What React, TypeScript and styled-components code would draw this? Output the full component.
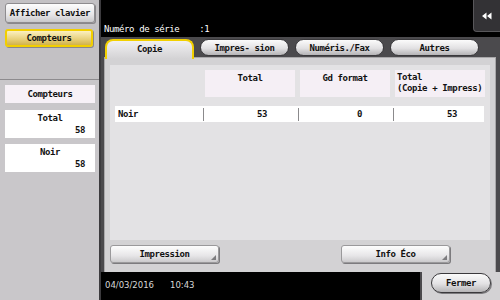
import styled, { createGlobalStyle } from 'styled-components';

const GlobalStyle = createGlobalStyle`
  html, body {
    margin: 0;
    padding: 0;
    background: #000;
  }
  * {
    box-sizing: border-box;
  }
`;

const mono = `'DejaVu Sans Mono', 'Liberation Mono', monospace`;

function App() {
  const tabs = ['Copie', 'Impres- sion', 'Numéris./Fax', 'Autres'];

  return (
    <>
      <GlobalStyle />
      <Screen>
        <Sidebar>
          <SideTop>
            <SideButton>Afficher clavier</SideButton>
            <SideButton active>Compteurs</SideButton>
          </SideTop>
          <SideBottom>
            <SideHeader>Compteurs</SideHeader>
            <CountBox>
              <span>Total</span>
              <CountValue>58</CountValue>
            </CountBox>
            <CountBox>
              <span>Noir</span>
              <CountValue>58</CountValue>
            </CountBox>
          </SideBottom>
        </Sidebar>

        <Main>
          <TopBar>
            <Serial>{'Numéro de série    :1'}</Serial>
            <CornerButton>
              <svg width='10' height='8' viewBox='0 0 10 8'>
                <path d='M0 4 L4.5 0.5 L4.5 7.5 Z M5 4 L9.5 0.5 L9.5 7.5 Z' fill='#fff' />
              </svg>
            </CornerButton>
          </TopBar>

          <Body>
            <TabRow>
              {tabs.map((t, i) => (
                <Tab key={t} selected={i === 0}>
                  {t}
                </Tab>
              ))}
            </TabRow>
            <Panel>
              <Content>
                <HeaderGrid>
                  <span />
                  <HeadCell>Total</HeadCell>
                  <HeadCell>Gd format</HeadCell>
                  <HeadCell left>
                    Total
                    <br />
                    (Copie + Impress)
                  </HeadCell>
                </HeaderGrid>
                <DataRow>
                  <RowLabel>Noir</RowLabel>
                  <RowValue>53</RowValue>
                  <RowValue>0</RowValue>
                  <RowValue last>53</RowValue>
                </DataRow>
              </Content>
              <ActionRow>
                <ActionButton>Impression</ActionButton>
                <ActionButton>Info Éco</ActionButton>
              </ActionRow>
            </Panel>
          </Body>

          <Footer>
            <StatusBar>
              <span>04/03/2016</span>
              <span>10:43</span>
            </StatusBar>
            <CloseArea>
              <CloseButton>Fermer</CloseButton>
            </CloseArea>
          </Footer>
        </Main>
      </Screen>
    </>
  );
}

const Screen = styled.div`
  width: 500px;
  height: 300px;
  display: flex;
  overflow: hidden;
  font-family: ${mono};
  font-size: 9px;
  letter-spacing: -0.4px;
  color: #111;
`;

const Sidebar = styled.div`
  width: 101px;
  height: 300px;
  display: flex;
  flex-direction: column;
  background: #c9c7ca;
  border-right: 2px solid #3c3b3e;
`;

const SideTop = styled.div`
  height: 80px;
  padding: 3px 5px 0 5px;
  display: flex;
  flex-direction: column;
  gap: 6px;
  background: #c3c1c4;
  border-bottom: 1px solid #8d8b8e;
`;

const SideButton = styled.div<{ active?: boolean }>`
  height: ${(p) => (p.active ? '18px' : '20px')};
  width: ${(p) => (p.active ? '88px' : '90px')};
  display: flex;
  align-items: center;
  justify-content: center;
  font-weight: bold;
  border-radius: 3px;
  border: ${(p) => (p.active ? '2px solid #f2cf00' : '1px solid #8e8c8f')};
  background: ${(p) =>
    p.active
      ? 'linear-gradient(#fbf0c0, #e6cf7a 60%, #d2b24a)'
      : 'linear-gradient(#fdfdfd, #e6e5e7 60%, #c9c8ca)'};
  box-shadow: 1px 1px 0 #8a888b;
`;

const SideBottom = styled.div`
  padding: 5px 5px 0 5px;
  display: flex;
  flex-direction: column;
  gap: 6px;
`;

const SideHeader = styled.div`
  height: 18px;
  width: 90px;
  display: flex;
  align-items: center;
  justify-content: center;
  font-weight: bold;
  background: #f7f1f7;
  margin-bottom: 1px;
`;

const CountBox = styled.div`
  width: 90px;
  height: 28px;
  background: #fff;
  display: flex;
  flex-direction: column;
  align-items: center;
  padding: 2px 10px 0 10px;
  font-weight: bold;
  line-height: 12px;
`;

const CountValue = styled.span`
  align-self: flex-end;
`;

const Main = styled.div`
  flex: 1;
  display: flex;
  flex-direction: column;
`;

const TopBar = styled.div`
  height: 37px;
  background: #000;
  display: flex;
  justify-content: space-between;
`;

const Serial = styled.div`
  align-self: flex-end;
  padding: 0 0 3px 3px;
  color: #fff;
  white-space: pre;
`;

const CornerButton = styled.div`
  width: 27px;
  height: 32px;
  background: #333235;
  border: 1px solid #58575a;
  border-top: none;
  border-right: none;
  border-radius: 0 0 0 4px;
  display: flex;
  align-items: center;
  justify-content: center;
`;

const Body = styled.div`
  height: 235px;
  background: #4b4a4d;
  padding: 2px 4px 0 3px;
  display: flex;
  flex-direction: column;
`;

const TabRow = styled.div`
  display: flex;
  gap: 6px;
  padding-left: 1px;
  height: 18px;
  position: relative;
  z-index: 1;
`;

const Tab = styled.div<{ selected?: boolean }>`
  width: 89px;
  display: flex;
  align-items: center;
  justify-content: center;
  font-weight: bold;
  ${(p) =>
    p.selected
      ? `
    height: 20px;
    padding-bottom: 2px;
    border: 2px solid #f2d000;
    border-bottom: none;
    border-radius: 8px 8px 0 0;
    background: linear-gradient(#f1f0f2, #d3d2d4);
  `
      : `
    height: 17px;
    border: 1px solid #3a393c;
    border-radius: 9px;
    background: linear-gradient(#fbfbfb, #e2e1e3 55%, #b5b4b6);
  `}
`;

const Panel = styled.div`
  flex: 1;
  background: #d3d2d4;
  border: 1px solid #a9a8aa;
  border-bottom: none;
  padding: 7px 5px 0 5px;
  display: flex;
  flex-direction: column;
`;

const Content = styled.div`
  height: 175px;
  background: #e3e2e4;
  padding: 5px 5px 0 5px;
`;

const HeaderGrid = styled.div`
  display: grid;
  grid-template-columns: 85px 90px 90px 90px;
  column-gap: 5px;
  height: 27px;
`;

const HeadCell = styled.div<{ left?: boolean }>`
  background: #f5eff5;
  font-weight: bold;
  line-height: 11px;
  padding: ${(p) => (p.left ? '2px 2px 0 2px' : '3px 0 0 0')};
  text-align: ${(p) => (p.left ? 'left' : 'center')};
`;

const DataRow = styled.div`
  margin-top: 9px;
  height: 16px;
  width: 369px;
  background: #fff;
  display: grid;
  grid-template-columns: 88px 95px 95px 1fr;
  align-items: center;
  font-weight: bold;
`;

const RowLabel = styled.span`
  padding-left: 3px;
`;

const RowValue = styled.span<{ last?: boolean }>`
  height: 13px;
  line-height: 13px;
  text-align: right;
  padding-right: ${(p) => (p.last ? '27px' : '31px')};
  border-left: 1px solid #8b8a8c;
`;

const ActionRow = styled.div`
  display: flex;
  gap: 122px;
  margin-top: 5px;
`;

const ActionButton = styled.div`
  position: relative;
  width: 109px;
  height: 18px;
  display: flex;
  align-items: center;
  justify-content: center;
  font-weight: bold;
  border-radius: 3px;
  border: 1px solid #9a999b;
  background: linear-gradient(#fdfdfd, #e7e6e8 60%, #cbcacc);
  box-shadow: 1px 1px 0 #7c7b7e;

  &::after {
    content: '';
    position: absolute;
    right: 2px;
    bottom: 2px;
    border-style: solid;
    border-width: 0 0 5px 5px;
    border-color: transparent transparent #7d7c7f transparent;
  }
`;

const Footer = styled.div`
  height: 28px;
  display: flex;
`;

const StatusBar = styled.div`
  flex: 1;
  background: #000;
  color: #d8d8d8;
  font-family: 'DejaVu Sans', 'Liberation Sans', sans-serif;
  font-size: 8.5px;
  letter-spacing: 0;
  display: flex;
  align-items: center;
  gap: 16px;
  padding: 0 0 2px 4px;
`;

const CloseArea = styled.div`
  width: 80px;
  background: #d3d2d4;
  border-left: 2px solid #4b4a4d;
  display: flex;
  justify-content: flex-end;
  padding: 1px 9px 0 0;
`;

const CloseButton = styled.div`
  width: 60px;
  height: 20px;
  display: flex;
  align-items: center;
  justify-content: center;
  font-weight: bold;
  border-radius: 10px;
  border: 1px solid #3a393c;
  background: linear-gradient(#fbfbfb, #e2e1e3 55%, #b5b4b6);
  box-shadow: 1px 1px 0 #7c7b7e;
`;

export default App;
